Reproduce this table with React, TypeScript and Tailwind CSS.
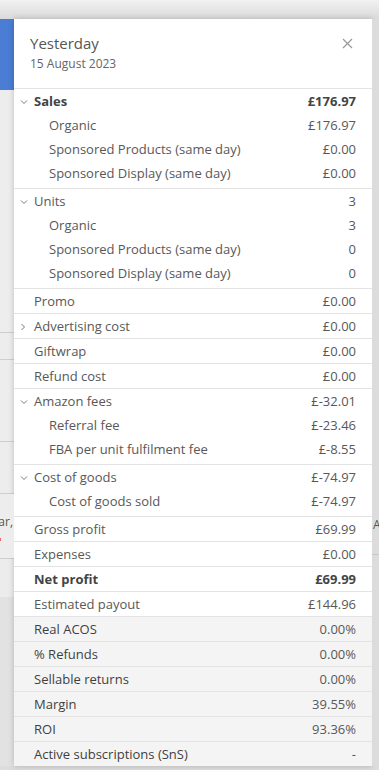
import React from "react";

type Row = { label: string; value: string; bold?: boolean; chevron?: "down" | "right" };

const ChevronDown = () => (
  <svg width="8" height="6" viewBox="0 0 8 6" className="block">
    <polyline points="1,1.5 4,4.5 7,1.5" fill="none" stroke="#777" strokeWidth="1" />
  </svg>
);
const ChevronRight = () => (
  <svg width="6" height="8" viewBox="0 0 6 8" className="block">
    <polyline points="1.5,1 4.5,4 1.5,7" fill="none" stroke="#777" strokeWidth="1" />
  </svg>
);

function MainRow({ r, shaded }: { r: Row; shaded?: boolean }) {
  return (
    <div
      className={`flex h-[25px] items-center justify-between border-t border-[#e3e3e3] pl-[6px] pr-[16px] pt-[2px] ${
        shaded ? "bg-[#f4f4f4]" : ""
      }`}
    >
      <div className="flex items-center">
        <div className="flex w-[14px] items-center justify-start">
          {r.chevron === "down" ? <ChevronDown /> : r.chevron === "right" ? <ChevronRight /> : null}
        </div>
        <span
          className={
            r.bold
              ? "font-bold text-[#444]"
              : shaded
              ? "font-medium text-[#3f3f3f]"
              : "text-[#585858]"
          }
        >
          {r.label}
        </span>
      </div>
      <span className={r.bold ? "font-bold text-[#444]" : "text-[#585858]"}>{r.value}</span>
    </div>
  );
}

function SubRow({ r }: { r: Row }) {
  return (
    <div className="flex h-[24px] items-center justify-between pl-[35px] pr-[16px] pt-[2px]">
      <span className="text-[#585858]">{r.label}</span>
      <span className="text-[#585858]">{r.value}</span>
    </div>
  );
}

function Group({ head, subs }: { head: Row; subs: Row[] }) {
  return (
    <div className="border-t border-[#e3e3e3] pb-[3px]">
      <div className="flex h-[24px] items-center justify-between pl-[6px] pr-[16px] pt-[2px]">
        <div className="flex items-center">
          <div className="flex w-[14px] items-center">
            <ChevronDown />
          </div>
          <span className={head.bold ? "font-bold text-[#444]" : "text-[#585858]"}>{head.label}</span>
        </div>
        <span className={head.bold ? "font-bold text-[#444]" : "text-[#585858]"}>{head.value}</span>
      </div>
      {subs.map((s) => (
        <SubRow key={s.label} r={s} />
      ))}
    </div>
  );
}

export default function App() {
  return (
    <div
      className="h-[770px] w-[379px] overflow-hidden bg-[#dcdcdc] text-[13px]"
      style={{ fontFamily: '"Open Sans", "Noto Sans", sans-serif' }}
    >
      <div className="h-[19px] bg-gradient-to-b from-[#f2f2f2] to-[#dadada]" />
      <div className="flex">
        {/* left strip of background page */}
        <div className="flex w-[14px] flex-col">
          <div className="h-[71px] bg-[#4a7dd3]" />
          <div className="h-[242px] bg-[#ededed]" />
          <div className="h-[1px] bg-[#cfcfcf]" />
          <div className="h-[26px] bg-[#ededed]" />
          <div className="h-[1px] bg-[#cfcfcf]" />
          <div className="h-[81px] bg-[#ededed]" />
          <div className="h-[1px] bg-[#cfcfcf]" />
          <div className="h-[51px] bg-[#ededed]" />
          <div className="h-[1px] bg-[#cfcfcf]" />
          <div className="relative h-[64px] overflow-hidden bg-[#ededed]">
            <span className="absolute right-[1px] top-[22px] text-[12px] leading-none text-[#555]">ar,</span>
            <span className="absolute left-[0px] top-[44px] h-[3px] w-[1px] bg-[#e66]" />
          </div>
          <div className="h-[1px] bg-[#cfcfcf]" />
          <div className="h-[38px] bg-[#ececec]" />
          <div className="flex-1 bg-[#e2e2e2]" />
        </div>

        {/* panel */}
        <div className="w-[358px] bg-white shadow-[0_0_6px_rgba(0,0,0,0.2)]">
          <div className="relative h-[69px] pl-[16px] pt-[13px]">
            <div className="text-[15px] leading-[22px] text-[#555]">Yesterday</div>
            <div className="mt-[2px] text-[12px] leading-[16px] text-[#666]">15 August 2023</div>
            <svg
              width="11"
              height="11"
              viewBox="0 0 11 11"
              className="absolute right-[19px] top-[19px]"
            >
              <path d="M1 1 L10 10 M10 1 L1 10" stroke="#999" strokeWidth="1.2" />
            </svg>
          </div>

          <Group
            head={{ label: "Sales", value: "£176.97", bold: true }}
            subs={[
              { label: "Organic", value: "£176.97" },
              { label: "Sponsored Products (same day)", value: "£0.00" },
              { label: "Sponsored Display (same day)", value: "£0.00" },
            ]}
          />
          <Group
            head={{ label: "Units", value: "3" }}
            subs={[
              { label: "Organic", value: "3" },
              { label: "Sponsored Products (same day)", value: "0" },
              { label: "Sponsored Display (same day)", value: "0" },
            ]}
          />
          <MainRow r={{ label: "Promo", value: "£0.00" }} />
          <MainRow r={{ label: "Advertising cost", value: "£0.00", chevron: "right" }} />
          <MainRow r={{ label: "Giftwrap", value: "£0.00" }} />
          <MainRow r={{ label: "Refund cost", value: "£0.00" }} />
          <Group
            head={{ label: "Amazon fees", value: "£-32.01" }}
            subs={[
              { label: "Referral fee", value: "£-23.46" },
              { label: "FBA per unit fulfilment fee", value: "£-8.55" },
            ]}
          />
          <Group
            head={{ label: "Cost of goods", value: "£-74.97" }}
            subs={[{ label: "Cost of goods sold", value: "£-74.97" }]}
          />
          <MainRow r={{ label: "Gross profit", value: "£69.99" }} />
          <MainRow r={{ label: "Expenses", value: "£0.00" }} />
          <MainRow r={{ label: "Net profit", value: "£69.99", bold: true }} />
          <MainRow r={{ label: "Estimated payout", value: "£144.96" }} />
          <MainRow shaded r={{ label: "Real ACOS", value: "0.00%" }} />
          <MainRow shaded r={{ label: "% Refunds", value: "0.00%" }} />
          <MainRow shaded r={{ label: "Sellable returns", value: "0.00%" }} />
          <MainRow shaded r={{ label: "Margin", value: "39.55%" }} />
          <MainRow shaded r={{ label: "ROI", value: "93.36%" }} />
          <MainRow shaded r={{ label: "Active subscriptions (SnS)", value: "-" }} />
        </div>

        {/* right strip */}
        <div className="flex w-[7px] flex-col">
          <div className="h-[497px] bg-[#dcdcdc]" />
          <div className="relative h-[38px] overflow-hidden bg-[#dcdcdc]">
            <span className="absolute left-[1px] top-[3px] text-[12px] leading-none text-[#555]">A</span>
          </div>
          <div className="h-[1px] bg-[#c8c8c8]" />
          <div className="flex-1 bg-[#dcdcdc]" />
        </div>
      </div>
    </div>
  );
}
